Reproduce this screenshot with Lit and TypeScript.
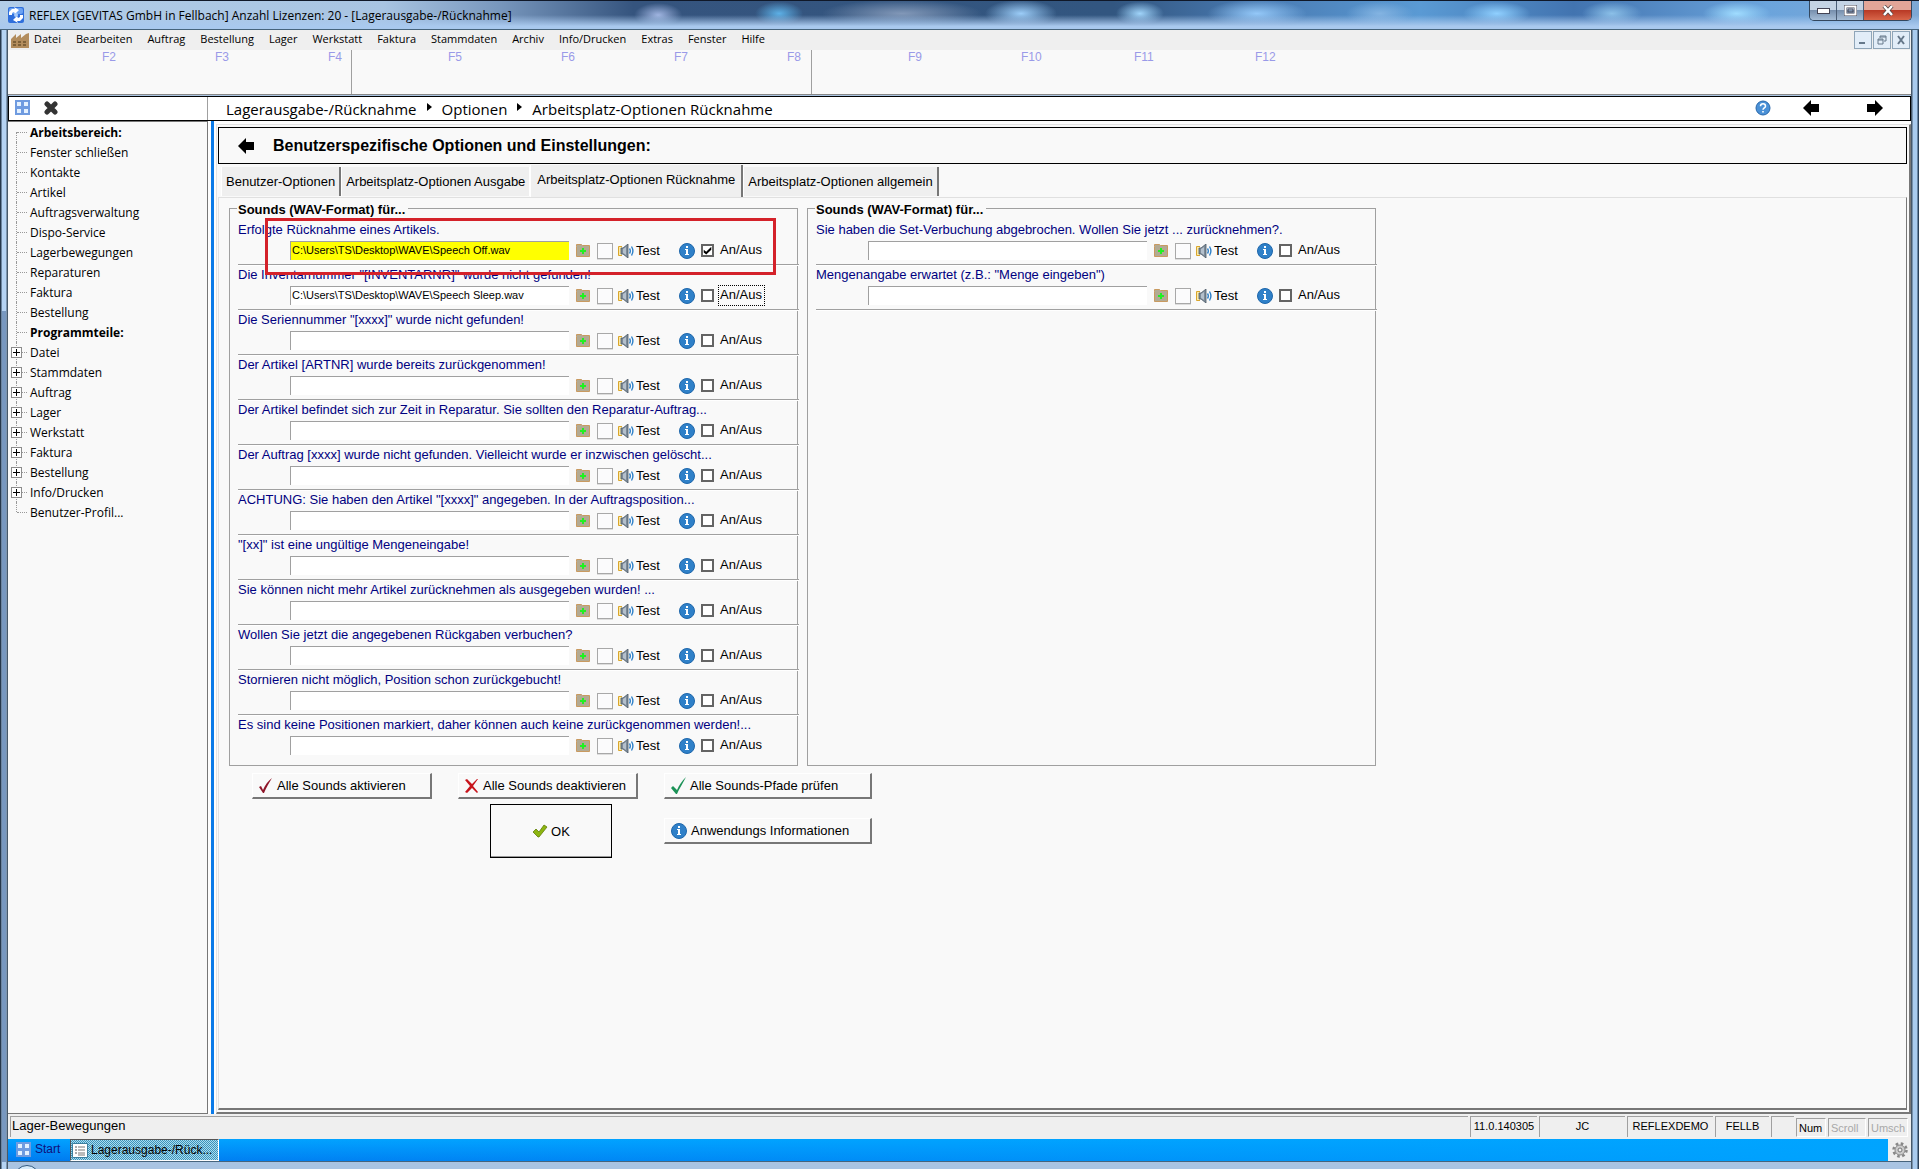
import { LitElement, html, css, svg, nothing } from "lit";
import { customElement, property, state } from "lit/decorators.js";
import { classMap } from "lit/directives/class-map.js";

interface SoundEntry {
  label: string;
  path?: string;
  on?: boolean;
  highlight?: boolean;
  focused?: boolean;
  plain?: boolean;
}

const MENU = ["Datei", "Bearbeiten", "Auftrag", "Bestellung", "Lager", "Werkstatt", "Faktura", "Stammdaten", "Archiv", "Info/Drucken", "Extras", "Fenster", "Hilfe"];
const KEY_GROUPS = [["F2", "F3", "F4"], ["F5", "F6", "F7", "F8"], ["F9", "F10", "F11", "F12"]];
const TREE: { text: string; kind?: "head" | "branch" }[] = [
  { text: "Arbeitsbereich:", kind: "head" },
  { text: "Fenster schließen" },
  { text: "Kontakte" },
  { text: "Artikel" },
  { text: "Auftragsverwaltung" },
  { text: "Dispo-Service" },
  { text: "Lagerbewegungen" },
  { text: "Reparaturen" },
  { text: "Faktura" },
  { text: "Bestellung" },
  { text: "Programmteile:", kind: "head" },
  { text: "Datei", kind: "branch" },
  { text: "Stammdaten", kind: "branch" },
  { text: "Auftrag", kind: "branch" },
  { text: "Lager", kind: "branch" },
  { text: "Werkstatt", kind: "branch" },
  { text: "Faktura", kind: "branch" },
  { text: "Bestellung", kind: "branch" },
  { text: "Info/Drucken", kind: "branch" },
  { text: "Benutzer-Profil..." },
];
const TABS = ["Benutzer-Optionen", "Arbeitsplatz-Optionen Ausgabe", "Arbeitsplatz-Optionen Rücknahme", "Arbeitsplatz-Optionen allgemein"];
const LEFT: SoundEntry[] = [
  { label: "Erfolgte Rücknahme eines Artikels.", path: "C:\\Users\\TS\\Desktop\\WAVE\\Speech Off.wav", on: true, highlight: true },
  { label: "Die Inventarnummer \"[INVENTARNR]\" wurde nicht gefunden!", path: "C:\\Users\\TS\\Desktop\\WAVE\\Speech Sleep.wav", focused: true },
  { label: "Die Seriennummer \"[xxxx]\" wurde nicht gefunden!" },
  { label: "Der Artikel [ARTNR] wurde bereits zurückgenommen!" },
  { label: "Der Artikel befindet sich zur Zeit in Reparatur. Sie sollten den Reparatur-Auftrag..." },
  { label: "Der Auftrag [xxxx] wurde nicht gefunden. Vielleicht wurde er inzwischen gelöscht..." },
  { label: "ACHTUNG: Sie haben den Artikel \"[xxxx]\" angegeben. In der Auftragsposition..." },
  { label: "\"[xx]\" ist eine ungültige Mengeneingabe!" },
  { label: "Sie können nicht mehr Artikel zurücknehmen als ausgegeben wurden! ..." },
  { label: "Wollen Sie jetzt die angegebenen Rückgaben verbuchen?" },
  { label: "Stornieren nicht möglich, Position schon zurückgebucht!" },
  { label: "Es sind keine Positionen markiert, daher können auch keine zurückgenommen werden!...", plain: true },
];
const RIGHT: SoundEntry[] = [
  { label: "Sie haben die Set-Verbuchung abgebrochen. Wollen Sie jetzt ... zurücknehmen?." },
  { label: "Mengenangabe erwartet (z.B.: \"Menge eingeben\")" },
];

const icon = (w: number, h: number, body: unknown) =>
  html`<svg width=${w} height=${h} viewBox="0 0 ${w} ${h}" aria-hidden="true">${body}</svg>`;

const appIcon = icon(16, 16, svg`
  <rect width="16" height="16" rx="2" fill="#2f6fdc"/><rect x="1" y="1" width="14" height="6" rx="2" fill="#6ba2f2"/>
  <path d="M1 8V5l3-3h3L6 0l5 3-4 4-1-2-2 1v2z" fill="#fff"/>
  <path d="M15 8v3l-3 3H9l1 2-5-3 4-4 1 2 2-1V8z" fill="#fff"/>
  <circle cx="8" cy="8" r="2" fill="#a9ccf8"/>`);
const factoryIcon = icon(18, 15, svg`
  <path d="M0 15V6l5-5v4l5-4v4l5-4 3-1v15z" fill="#b28c5c"/>
  <path d="M2 8h3v2H2zm5 0h3v2H7zm5 0h3v2h-3zM2 11h3v2H2zm5 0h3v2H7zm5 0h3v2h-3z" fill="#7d6038"/>`);
const gridIcon = icon(15, 15, svg`
  <rect width="15" height="15" fill="#6f9be0"/>
  <path d="M2 2h4v4H2zM9 2h4v4H9zM2 9h4v4H2zM9 9h4v4H9z" fill="#e4f1ff"/>`);
const crossIcon = icon(14, 14, svg`<path d="M3 3l8 8M11 3l-8 8" stroke="#333" stroke-width="5" stroke-linecap="round"/>`);
const arrowLeft = icon(16, 16, svg`<path d="M0 8l8-8v4h8v8H8v4z" fill="#000"/>`);
const arrowRight = icon(16, 16, svg`<path d="M16 8L8 0v4H0v8h8v4z" fill="#000"/>`);
const helpIcon = icon(16, 16, svg`
  <circle cx="8" cy="8" r="7" fill="#4a90d6" stroke="#2767ab"/>
  <path d="M5.500 6.200c0-3.200 5-3.200 5 0 0 1.800-2.500 1.700-2.500 3.600" fill="none" stroke="#fff" stroke-width="1.500"/>
  <path d="M7.200 11h1.600v1.600H7.200z" fill="#fff"/>`);
const infoIcon = icon(16, 16, svg`
  <circle cx="8" cy="8" r="7.500" fill="#2f80c8" stroke="#1d66ab"/>
  <path d="M7 3h2v2H7zM6 6h3v5h1v1H6v-1h1V7H6z" fill="#fff"/>`);
const folderIcon = icon(14, 13, svg`
  <path d="M.500 2.500v-2h5l1 1h7v11H.500z" fill="#b3aa93" stroke="#c99a60"/>
  <path d="M6 4h2v2h2v2H8v2H6V8H4V6h2z" fill="#22f022"/>`);
const speakerIcon = icon(16, 14, svg`
  <path d="M4 2.500H.500v9H4" fill="#fbe9a8" stroke="#d9a62c"/>
  <path d="M3 4h2l5-4v14l-5-4H3z" fill="#7d8b99" stroke="#4d5a68" stroke-width=".8"/>
  <path d="M5 5l3-2v8L5 9z" fill="#b4c0cc"/>
  <path d="M11.500 4.500q1.600 2.500 0 5M13.500 2.500q2.800 4.500 0 9" fill="none" stroke="#2f80c8" stroke-width="1.400"/>`);
const redCheck = icon(14, 16, svg`<path d="M0 9l2-1 2 4C6 7 9 3 13 0 10 5 7 10 5 15H4z" fill="#8e1528"/>`);
const redCross = icon(14, 16, svg`<path d="M0 2l2-1 5 5 5-5h1L8 8l5 6-1 1-5-5-5 5-2-1 5-6z" fill="#c8141c"/>`);
const greenCheck = icon(15, 18, svg`<path d="M0 11l2-2 4 4C8 8 11 4 15 0 12 6 8 12 6 17H5z" fill="#1c9257"/>`);
const okCheck = icon(16, 16, svg`<path d="M1 9l3-3 3 3 5-7 3 2-8 10H6z" fill="#8db510" stroke="#5f7d08" stroke-width=".8"/>`);
const listIcon = icon(16, 15, svg`
  <path d="M.500.500h15v14H.500z" fill="#fff" stroke="#3b7f9f"/><path d="M3 4h2M3 7h2M3 10h2" stroke="#555"/>
  <path d="M6 4h7M6 7h7M6 10h7M6 12h7" stroke="#777"/>`);
const gearIcon = icon(16, 16, svg`
  <circle cx="8" cy="8" r="6.500" fill="none" stroke="#888" stroke-width="2.500" stroke-dasharray="2.600 2.500"/>
  <circle cx="8" cy="8" r="5" fill="#ccc" stroke="#888"/><circle cx="8" cy="8" r="2" fill="#eee" stroke="#777"/>`);

@customElement("sound-row")
export class SoundRow extends LitElement {
  @property({ attribute: false }) entry!: SoundEntry;
  @property() rowId = "row";

  static styles = css`
    :host { display: block; margin-right: -2px; }
    .row { height: 45px; box-sizing: border-box; border-bottom: 1px solid #a0a0a0; box-shadow: 0 1px #fff; }
    .row.plain { border-color: transparent; box-shadow: none; }
    svg { display: block; flex: none; }
    .caption { display: block; height: 21px; line-height: 20px; color: #000080; white-space: nowrap; }
    .line { display: flex; align-items: center; height: 19px; padding-left: 52px; }
    .path { box-sizing: border-box; width: 279px; height: 19px; margin: 0 7px 0 0; padding: 0 1px 2px; border: 0; border-top: 1px solid #a0a0a0; border-left: 1px solid #a0a0a0; background: #fff; font: 11px "Liberation Sans", sans-serif; color: #000; outline: 0; border-radius: 0; }
    .path.highlight { background: #ff0; }
    button { font: inherit; color: inherit; border: 0; background: none; padding: 0; display: flex; align-items: center; }
    .blank { box-sizing: border-box; width: 16px; height: 16px; margin: 0 5px 0 7px; border: 1px solid #a8a8a8; background: #fbfbfc; box-shadow: 0 1px #ddd; }
    .test { gap: 2px; width: 61px; }
    .toggle { display: flex; align-items: center; gap: 4px; margin-left: 6px; }
    .box { appearance: none; flex: none; display: grid; place-items: center; width: 13px; height: 13px; box-sizing: border-box; margin: 0; border: 2px solid #646464; background: #fff; border-radius: 0; }
    .box:checked::after { content: ""; width: 9px; height: 8px; background: #000; clip-path: polygon(8% 40%, 36% 66%, 92% 4%, 92% 40%, 36% 100%, 8% 74%); }
    .word { padding: 1px 2px 2px 1px; border: 1px solid transparent; line-height: 16px; }
    .word.focused { border: 1px dotted #000; }
  `;

  render() {
    const e = this.entry;
    const id = this.rowId;
    return html`
      <div class=${classMap({ row: true, plain: !!e.plain })}>
        <label class="caption" for=${id}>${e.label}</label>
        <div class="line">
          <input class=${classMap({ path: true, highlight: !!e.highlight })} id=${id} type="text" .value=${e.path ?? ""} />
          <button type="button" aria-label="Datei wählen">${folderIcon}</button>
          <button type="button" class="blank" aria-label="Leeren"></button>
          <button type="button" class="test">${speakerIcon}Test</button>
          <button type="button" aria-label="Information">${infoIcon}</button>
          <label class="toggle">
            <input class="box" type="checkbox" .checked=${!!e.on} />
            <span class=${classMap({ word: true, focused: !!e.focused })}>An/Aus</span>
          </label>
        </div>
      </div>`;
  }
}

@customElement("app-root")
export class AppRoot extends LitElement {
  @state() private tab = 2;

  static styles = css`
    :host { display: block; font: 13px "Liberation Sans", Arial, sans-serif; color: #000; }
    svg { display: block; flex: none; }
    button { font: inherit; color: inherit; border: 0; background: none; padding: 0; border-radius: 0; }
    a { color: inherit; text-decoration: none; }
    .window { position: relative; box-sizing: border-box; min-height: 100vh; display: flex; flex-direction: column; padding: 0 8px 7px; overflow: hidden;
      background: linear-gradient(90deg, #26384c 0 1px, #b5d3f3 2px 6px, #46586a 7px 8px, transparent 8px calc(100% - 8px), #46586a calc(100% - 8px) calc(100% - 7px), #a9cbee calc(100% - 6px) calc(100% - 2px), #2a4058 calc(100% - 1px)), #a9c4e2; }
    .window::after { content: ""; position: absolute; left: 2px; top: 311px; bottom: 7px; width: 4px; background: #7898c0; }
    .orb { position: absolute; left: 14px; bottom: -22px; width: 24px; height: 24px; border: 1px solid #31587e; border-radius: 50%; background: #d7ebfa; }

    .titlebar { display: flex; justify-content: space-between; height: 30px; box-sizing: border-box; margin: 0 -8px; padding: 0 7px 0 8px; border-top: 1px solid #101828; border-bottom: 1px solid #46647c; font: 12px "Open Sans", "Noto Sans", sans-serif;
      background:
        linear-gradient(180deg, transparent 50%, #a9c9ee 90%),
        radial-gradient(ellipse 24px 12px at 34.300% 50%, #9fb4e0, transparent),
        radial-gradient(ellipse 24px 12px at 40.600% 45%, #5db0e6, transparent),
        radial-gradient(ellipse 80px 14px at 47% 45%, #8298b8, transparent),
        radial-gradient(ellipse 36px 14px at 53.200% 45%, #9ccdf8, transparent),
        radial-gradient(ellipse 24px 12px at 59.400% 45%, #a0d4fa, transparent),
        radial-gradient(ellipse 50px 14px at 65.500% 45%, #94c8f8, transparent),
        radial-gradient(ellipse 34px 12px at 71.900% 45%, #84b4e2, transparent),
        radial-gradient(ellipse 34px 12px at 78% 45%, #90d0ff, transparent),
        radial-gradient(ellipse 30px 12px at 84% 45%, #8cc0e8, transparent),
        radial-gradient(ellipse 34px 12px at 90.500% 45%, #a0dcff, transparent),
        linear-gradient(90deg, #b2cde8 0, #a8c4e2 20%, #7897bd 26%, #35547e 33%, #325680 58%, #4a7cb4 66%, #5a9ad4 74%, #4274b0 82%, #6ba4dc 92%, #7ea8d4); }
    .caption { display: flex; align-items: center; gap: 5px; }
    .frame-buttons { display: flex; height: 20px; box-sizing: border-box; border: 1px solid #33475e; border-top: 0; border-radius: 0 0 5px 5px; overflow: hidden; }
    .frame-buttons button { display: grid; place-items: center; width: 27px; background: linear-gradient(#c4d3e4 45%, #7890ae 50%, #a6bdd6); border-right: 1px solid #4a5d76; }
    .frame-buttons .close { width: 47px; border: 0; background: linear-gradient(#e2a598 45%, #b93a26 50%, #d8664a); }

    .menubar { display: flex; align-items: center; height: 20px; background: #efefef; font: 11px "Open Sans", "Noto Sans", sans-serif; padding-left: 3px; }
    .menu { display: flex; gap: 15px; margin-left: 5px; padding-bottom: 4px; }
    .mdi { display: flex; gap: 1px; margin-left: auto; padding-right: 1px; }
    .mdi button { display: grid; place-items: center; width: 18px; height: 18px; box-sizing: border-box; border: 1px solid #8fa5b8; background: #e2edf8; }

    .toolbar { display: flex; height: 45px; box-sizing: border-box; background: #f9f9f9; border-bottom: 1px solid #888; color: #9a9ae8; font-size: 12px; }
    .keys { display: flex; padding: 0 11px 0 96px; border-right: 1px solid #a0a0a0; }
    .keys:first-child { padding: 0 10px 0 94px; }
    .keys:last-child { border: 0; }
    .key { width: 113px; display: block; line-height: 15px; text-align: left; height: 15px; }
    .key:last-child { width: 13px; }
    .keys:last-child .key:last-child { margin-left: 8px; }

    .crumbbar { display: flex; align-items: center; height: 25px; box-sizing: border-box; margin-top: 1px; border: 1px solid #000; background: #fff; }
    .side-tools { display: flex; gap: 14px; align-items: center; box-sizing: border-box; width: 199px; height: 23px; border-right: 1px solid #a0a0a0; padding: 0 0 2px 6px; }
    .crumbs { display: flex; align-items: center; gap: 10px; margin-left: 18px; font: 15px "Open Sans", "Noto Sans", sans-serif; }
    .crumbs svg { margin-top: -3px; }
    .nav { display: flex; align-items: center; margin-left: auto; padding: 0 27px 2px 0; gap: 32px; }
    .nav .pair { display: flex; gap: 48px; }

    .body { flex: 1; display: flex; background: #fdfdfd; }
    .tree { box-sizing: border-box; width: 200px; border: 1px solid #777; border-left: 0; background: #f9f9f9; font: 12px "Open Sans", "Noto Sans", sans-serif; margin: 0; padding: 0 0 0 8px; list-style: none; }
    .node { position: relative; display: flex; align-items: center; height: 20px; padding-left: 14px; white-space: nowrap; }
    .node::before { content: ""; position: absolute; left: 0; top: 0; height: 20px; border-left: 1px dotted #999; }
    .node:first-child::before { top: 10px; height: 10px; }
    .node:last-child::before { height: 10px; }
    .node::after { content: ""; position: absolute; left: 1px; top: 10px; width: 10px; border-top: 1px dotted #999; }
    .head { font-weight: 700; }
    .plus { position: absolute; z-index: 1; left: -5px; top: 5px; width: 11px; height: 11px; box-sizing: border-box; border: 1px solid #8c8c8c; background: linear-gradient(#000, #000) center / 7px 1px no-repeat, linear-gradient(#000, #000) center / 1px 7px no-repeat, #fff; }

    .main { flex: 1; display: flex; margin-left: 3px; border-left: 3px solid #0a7ae8; padding: 3px 0 0 2px; background: #fdfdfd; }
    .outer { flex: 1; display: flex; flex-direction: column; border: 1px solid #e3e3e3; border-right: 2px solid #777; border-bottom: 2px solid #777; background: #f9f9f9; padding: 2px 2px 2px 1px; }
    .banner { display: flex; align-items: center; height: 37px; box-sizing: border-box; border: 1px solid #000; padding-left: 19px; gap: 19px; }
    .banner h1 { font-size: 16px; margin: 0; }
    .tabs { display: flex; align-items: flex-end; height: 33px; padding-left: 3px; }
    .tab { box-sizing: border-box; height: 29px; margin-bottom: 1px; padding: 0 4px; border-left: 1px solid #fff; border-right: 1px solid #fff; background: #efefef; white-space: nowrap; }
    .tab.raised { border-right: 2px solid #777; }
    .tab.active { height: 32px; margin-bottom: 0; padding: 0 6px 4px; border-right: 2px solid #777; }
    .sheet { flex: 1; border: 1px solid #e0e0e0; border-right-color: #777; border-bottom: 2px solid #777; }
    .groups { display: flex; gap: 9px; padding-left: 10px; }
    fieldset { position: relative; flex: 0 1 569px; box-sizing: border-box; min-width: 0; height: 568px; margin: 0; border: 1px solid #a0a0a0; padding: 2px 0 5px 8px; }
    legend { padding: 4px 3px 0 1px; margin-left: -1px; line-height: 16px; font-weight: 700; }
    .marker { position: absolute; left: 35px; top: 0; width: 511px; height: 57px; box-sizing: border-box; border: 3px solid #d4222a; pointer-events: none; }

    .actions { display: grid; grid-template-columns: 180px 180px 208px; column-gap: 26px; padding: 7px 0 0 33px; justify-content: start; }
    .action { display: flex; align-items: center; gap: 4px; height: 26px; box-sizing: border-box; padding-left: 6px; border: 1px solid #fff; border-right: 2px solid #777; border-bottom: 2px solid #777; white-space: nowrap; }
    .ok { display: flex; align-items: center; justify-content: center; gap: 3px; height: 54px; width: 122px; box-sizing: border-box; margin: 5px 0 0 32px; border: 1px solid #000; box-shadow: inset 0 -1px #999; grid-column: 2; }
    .info { align-self: center; margin-top: 5px; }

    .status { display: flex; align-items: center; height: 25px; background: #efefef; padding: 0 3px 0 2px; gap: 2px; }
    .cell { box-sizing: border-box; height: 21px; line-height: 18px; border-top: 1px solid #a0a0a0; border-left: 1px solid #a0a0a0; text-align: center; font-size: 11px; }
    .message { flex: 1; text-align: left; padding-left: 1px; font-size: 13px; }
    .version { width: 67px; } .user, .db { width: 86px; } .site { width: 54px; } .spare { width: 23px; }
    .lock { box-sizing: border-box; height: 19px; line-height: 18px; width: 38px; padding: 0 2px; border: 1px solid #fff; border-top-color: #a0a0a0; border-left-color: #a0a0a0; margin: 2px 0 0; font-size: 11px; color: #a8a8a8; }
    .lock.on { color: #000; width: 30px; }
    .lock:last-child { width: 40px; }

    .taskbar { display: flex; height: 23px; box-sizing: border-box; border-bottom: 1px solid #46647c; padding-left: 2px; background: linear-gradient(90deg, transparent, #00a4ff), linear-gradient(#02a2ff, #007af0); font-size: 12px; }
    .start { display: flex; align-items: center; gap: 4px; width: 60px; padding: 0 0 2px 6px; color: #10107c; }
    .task { display: flex; align-items: center; gap: 3px; width: 149px; box-sizing: border-box; padding: 0 0 0 1px; border: 1px solid #555; border-right-color: #fff; border-bottom-color: #fff; background: repeating-conic-gradient(#3d93b8 0 25%, #a9dcf2 0 50%) 0 0 / 2px 2px; white-space: nowrap; }
    .gear { display: grid; place-items: center; width: 23px; margin-left: auto; background: #efefef; }
  `;

  private rows(list: SoundEntry[], prefix: string) {
    return list.map((entry, i) => html`<sound-row .entry=${entry} .rowId=${`${prefix}-${i}`}></sound-row>`);
  }

  render() {
    const pointer = icon(5, 8, svg`<path d="M0 0l5 4-5 4z" fill="#000"/>`);
    return html`
      <div class="window">
        <header class="titlebar">
          <div class="caption">${appIcon}<span>REFLEX [GEVITAS GmbH in Fellbach] Anzahl Lizenzen: 20 - [Lagerausgabe-/Rücknahme]</span></div>
          <div class="frame-buttons">
            <button aria-label="Minimieren">${icon(13, 6, svg`<rect x=".500" y=".500" width="12" height="5" fill="#fff" stroke="#445"/>`)}</button>
            <button aria-label="Maximieren">${icon(13, 11, svg`<rect x="1.500" y="1.500" width="10" height="8" fill="none" stroke="#445" stroke-width="3"/><rect x="1.500" y="1.500" width="10" height="8" fill="none" stroke="#fff" stroke-width="2"/><rect x="4" y="4" width="5" height="3" fill="none" stroke="#445"/>`)}</button>
            <button class="close" aria-label="Schließen">${icon(12, 11, svg`<path d="M2 1l8 9M10 1L2 10" stroke="#544" stroke-width="4"/><path d="M2 1l8 9M10 1L2 10" stroke="#fff" stroke-width="2.500"/>`)}</button>
          </div>
        </header>
        <nav class="menubar">
          ${factoryIcon}
          <div class="menu">${MENU.map((m) => html`<a href="#">${m}</a>`)}</div>
          <div class="mdi">
            <button aria-label="Fenster minimieren">${icon(10, 10, svg`<path d="M1 7h6v2H1z" fill="#66788a"/>`)}</button>
            <button aria-label="Fenster wiederherstellen">${icon(10, 10, svg`<path d="M3 3V1h6v5H7M1 4h5v5H1zM1 5h5M3 2h6" fill="none" stroke="#66788a"/>`)}</button>
            <button aria-label="Fenster schließen">${icon(10, 10, svg`<path d="M2 1l6 8M8 1L2 9" stroke="#66788a" stroke-width="2"/>`)}</button>
          </div>
        </nav>
        <div class="toolbar">
          ${KEY_GROUPS.map((g) => html`<div class="keys">${g.map((k) => html`<button class="key">${k}</button>`)}</div>`)}
        </div>
        <div class="crumbbar">
          <div class="side-tools">
            <button aria-label="Übersicht">${gridIcon}</button>
            <button aria-label="Schließen">${crossIcon}</button>
          </div>
          <div class="crumbs">
            <a href="#">Lagerausgabe-/Rücknahme</a>${pointer}<a href="#">Optionen</a>${pointer}<a href="#">Arbeitsplatz-Optionen Rücknahme</a>
          </div>
          <div class="nav">
            <button aria-label="Hilfe">${helpIcon}</button>
            <div class="pair">
              <button aria-label="Zurück">${arrowLeft}</button>
              <button aria-label="Vor">${arrowRight}</button>
            </div>
          </div>
        </div>
        <div class="body">
          <ul class="tree">
            ${TREE.map((n) => html`<li class=${classMap({ node: true, head: n.kind === "head" })}>
              ${n.kind === "branch" ? html`<button class="plus" aria-label="Aufklappen"></button>` : nothing}
              ${n.kind === "head" ? html`<span>${n.text}</span>` : html`<a href="#">${n.text}</a>`}
            </li>`)}
          </ul>
          <main class="main">
            <div class="outer">
              <div class="banner">
                <button aria-label="Zurück">${arrowLeft}</button>
                <h1>Benutzerspezifische Optionen und Einstellungen:</h1>
              </div>
              <div class="tabs" role="tablist">
                ${TABS.map((t, i) => html`<button role="tab" aria-selected=${i === this.tab ? "true" : "false"}
                  class=${classMap({ tab: true, active: i === this.tab, raised: i !== this.tab && i !== this.tab - 1 })}
                  @click=${() => (this.tab = i)}>${t}</button>`)}
              </div>
              <section class="sheet">
                <div class="groups">
                  <fieldset>
                    <legend>Sounds (WAV-Format) für...</legend>
                    ${this.rows(LEFT, "l")}
                    <div class="marker"></div>
                  </fieldset>
                  <fieldset>
                    <legend>Sounds (WAV-Format) für...</legend>
                    ${this.rows(RIGHT, "r")}
                  </fieldset>
                </div>
                <div class="actions">
                  <button class="action">${redCheck}Alle Sounds aktivieren</button>
                  <button class="action">${redCross}Alle Sounds deaktivieren</button>
                  <button class="action">${greenCheck}Alle Sounds-Pfade prüfen</button>
                  <button class="ok">${okCheck}OK</button>
                  <button class="action info">${infoIcon}Anwendungs Informationen</button>
                </div>
              </section>
            </div>
          </main>
        </div>
        <footer class="status">
          <div class="cell message">Lager-Bewegungen</div>
          <div class="cell version">11.0.140305</div>
          <div class="cell user">JC</div>
          <div class="cell db">REFLEXDEMO</div>
          <div class="cell site">FELLB</div>
          <div class="cell spare"></div>
          <div class="lock on">Num</div>
          <div class="lock">Scroll</div>
          <div class="lock">Umsch</div>
        </footer>
        <div class="taskbar">
          <button class="start">${gridIcon}Start</button>
          <button class="task">${listIcon}Lagerausgabe-/Rück...</button>
          <button class="gear" aria-label="Einstellungen">${gearIcon}</button>
        </div>
        <div class="orb"></div>
      </div>`;
  }
}
